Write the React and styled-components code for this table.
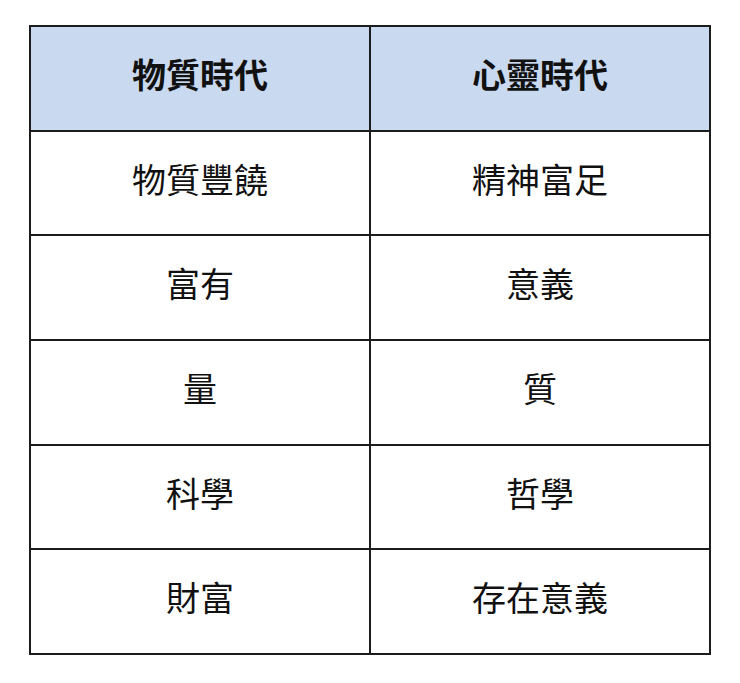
import React from "react";
import styled, { createGlobalStyle } from "styled-components";

const GlobalStyle = createGlobalStyle`
	html, body {
		margin: 0;
		background: #ffffff;
	}
	body {
		font-family: "Noto Sans CJK TC", "Noto Sans", sans-serif;
	}
`;

const rows = [
	["物質豐饒", "精神富足"],
	["富有", "意義"],
	["量", "質"],
	["科學", "哲學"],
	["財富", "存在意義"]
];

const Page = styled.div`
	padding: 25px 29px;
`;

const Table = styled.table`
	width: 682px;
	border-collapse: collapse;
	table-layout: fixed;
`;

const Cell = styled.td`
	height: 93.7px;
	border: 2px solid #1c1c1c;
	text-align: center;
	vertical-align: middle;
	padding: 0 0 9px;
	font-size: 34px;
	line-height: 1;
	color: #111111;
	font-weight: ${props => (props.head ? 700 : 400)};
	background: ${props => (props.head ? "#c9d9ef" : "#ffffff")};
`;

export default function App() {
	return (
		<Page>
			<GlobalStyle />
			<Table>
				<thead>
					<tr>
						<Cell as="th" head>物質時代</Cell>
						<Cell as="th" head>心靈時代</Cell>
					</tr>
				</thead>
				<tbody>
					{rows.map(([left, right]) => (
						<tr key={left}>
							<Cell>{left}</Cell>
							<Cell>{right}</Cell>
						</tr>
					))}
				</tbody>
			</Table>
		</Page>
	);
}
